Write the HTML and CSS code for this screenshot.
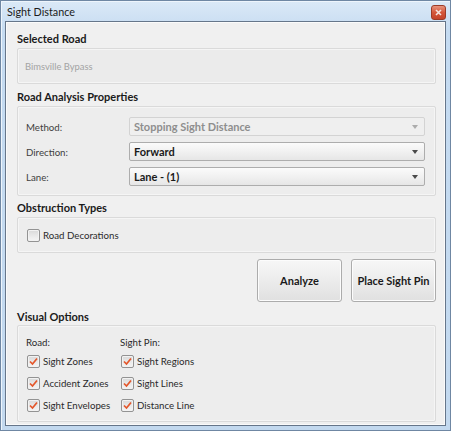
FILE: index.html
```html
<!DOCTYPE html>
<html>
<head>
<meta charset="utf-8">
<link rel="stylesheet" href="styles.css">
</head>
<body>
<div class="window">
  <div class="titlebar">
    <span class="title">Sight Distance</span>
    <span class="close"><svg width="7" height="7" viewBox="0 0 7 7"><path d="M1 1 L6 6 M6 1 L1 6" stroke="#f4e4e0" stroke-width="1.6" fill="none"/></svg></span>
  </div>
  <div class="client">
    <div class="section-title">Selected Road</div>
    <div class="group road-box"><span class="road-name">Bimsville Bypass</span></div>

    <div class="section-title gap5">Road Analysis Properties</div>
    <div class="group props">
      <div class="prop-row">
        <span class="prop-label">Method:</span>
        <div class="combo disabled"><span>Stopping Sight Distance</span><span class="arrow"></span></div>
      </div>
      <div class="prop-row">
        <span class="prop-label">Direction:</span>
        <div class="combo"><span>Forward</span><span class="arrow"></span></div>
      </div>
      <div class="prop-row">
        <span class="prop-label">Lane:</span>
        <div class="combo"><span>Lane - (1)</span><span class="arrow"></span></div>
      </div>
    </div>

    <div class="section-title gap4">Obstruction Types</div>
    <div class="group obstr">
      <div class="check"><span class="box"></span><span>Road Decorations</span></div>
    </div>

    <div class="actions">
      <button class="btn">Analyze</button>
      <button class="btn">Place Sight Pin</button>
    </div>

    <div class="section-title gap7">Visual Options</div>
    <div class="group visual">
      <div class="col">
        <div class="col-head">Road:</div>
        <div class="check row"><span class="box checked"><svg width="11" height="11" viewBox="0 0 11 11"><path d="M2 5.5 L4.5 8 L9 2.5" stroke="#e4572b" stroke-width="1.7" fill="none"/></svg></span><span>Sight Zones</span></div>
        <div class="check row"><span class="box checked"><svg width="11" height="11" viewBox="0 0 11 11"><path d="M2 5.5 L4.5 8 L9 2.5" stroke="#e4572b" stroke-width="1.7" fill="none"/></svg></span><span>Accident Zones</span></div>
        <div class="check row"><span class="box checked"><svg width="11" height="11" viewBox="0 0 11 11"><path d="M2 5.5 L4.5 8 L9 2.5" stroke="#e4572b" stroke-width="1.7" fill="none"/></svg></span><span>Sight Envelopes</span></div>
      </div>
      <div class="col">
        <div class="col-head">Sight Pin:</div>
        <div class="check row"><span class="box checked"><svg width="11" height="11" viewBox="0 0 11 11"><path d="M2 5.5 L4.5 8 L9 2.5" stroke="#e4572b" stroke-width="1.7" fill="none"/></svg></span><span>Sight Regions</span></div>
        <div class="check row"><span class="box checked"><svg width="11" height="11" viewBox="0 0 11 11"><path d="M2 5.5 L4.5 8 L9 2.5" stroke="#e4572b" stroke-width="1.7" fill="none"/></svg></span><span>Sight Lines</span></div>
        <div class="check row"><span class="box checked"><svg width="11" height="11" viewBox="0 0 11 11"><path d="M2 5.5 L4.5 8 L9 2.5" stroke="#e4572b" stroke-width="1.7" fill="none"/></svg></span><span>Distance Line</span></div>
      </div>
    </div>
  </div>
</div>
</body>
</html>
```

FILE: styles.css
```css
* { box-sizing: border-box; }
html, body { margin: 0; padding: 0; }
body {
  width: 451px;
  height: 431px;
  overflow: hidden;
  font-family: Lato, "Liberation Sans", Arial, sans-serif;
  font-size: 9.7px;
  color: #1e1e1e;
  background: #c6dcf2;
}
.window {
  width: 451px;
  height: 431px;
  border: 1px solid #6f87a3;
  background: linear-gradient(#dbe9f7, #c5dbf1 30px, #c3d9ef);
  padding: 0 4px 4px 4px;
  display: flex;
  flex-direction: column;
  box-shadow: inset 1px 1px 0 #eef5fc;
}
.titlebar {
  height: 20px;
  flex: none;
  display: flex;
  align-items: center;
  justify-content: space-between;
  padding-left: 2px;
}
.title {
  font-size: 10.8px;
  color: #1b1b1b;
  padding-top: 1px;
}
.close {
  width: 15px;
  height: 15px;
  margin-top: 3px;
  border: 1px solid #9b3b28;
  border-radius: 3px;
  background: linear-gradient(#e8947e, #d4573b 50%, #c4432a);
  display: flex;
  align-items: center;
  justify-content: center;
}
.close svg { display: block; }
.client {
  flex: 1;
  background: #f0f0f0;
  border: 1px solid #66768a;
  box-shadow: inset 0 0 0 1px #fbfbfb;
  padding: 9px 9px 0 11px;
  display: flex;
  flex-direction: column;
}
.section-title {
  font-weight: bold;
  font-size: 11px;
  height: 16px;
  line-height: 16px;
  flex: none;
  color: #1a1a1a;
}
.gap5 { margin-top: 5px; }
.gap4 { margin-top: 4px; }
.gap7 { margin-top: 7px; }
.group {
  flex: none;
  border: 1px solid #dadada;
  border-radius: 2px;
  background: #ededed;
  box-shadow: inset 0 0 0 1px #f5f5f5;
}
.road-box {
  margin-top: 1px;
  height: 36px;
  display: flex;
  align-items: center;
  padding-left: 7px;
  background: #ebebeb;
}
.road-name { color: #a3a3a3; font-size: 9.4px; }
.props {
  margin-top: 1px;
  height: 90px;
  padding: 10px 10px 9px 8px;
  display: flex;
  flex-direction: column;
  gap: 6px;
}
.prop-row {
  display: flex;
  align-items: center;
  height: 19px;
}
.prop-label {
  width: 103px;
  flex: none;
  color: #404040;
}
.combo {
  flex: 1;
  height: 19px;
  border: 1px solid #adadad;
  border-radius: 2px;
  background: linear-gradient(#fbfbfb, #f1f1f1 50%, #e6e6e6);
  display: flex;
  align-items: center;
  justify-content: space-between;
  padding: 0 6px 0 4px;
  font-weight: bold;
  font-size: 11px;
  color: #1a1a1a;
}
.combo.disabled {
  border-color: #d3d3d3;
  background: #efefef;
  color: #8e8e8e;
}
.arrow {
  width: 0;
  height: 0;
  border-left: 3.5px solid transparent;
  border-right: 3.5px solid transparent;
  border-top: 4px solid #4a4a4a;
}
.combo.disabled .arrow { border-top-color: #acacac; }
.obstr {
  margin-top: 1px;
  height: 36px;
  display: flex;
  align-items: center;
  padding-left: 9px;
}
.check {
  display: flex;
  align-items: center;
  color: #2a2a2a;
}
.box {
  width: 13px;
  height: 13px;
  flex: none;
  border: 1px solid #939393;
  border-radius: 2px;
  background: linear-gradient(#d9d9d9, #eeeeee 70%, #f4f4f4);
  box-shadow: inset 0 0 0 1px #f2f2f2;
  margin-right: 3px;
  display: flex;
  align-items: center;
  justify-content: center;
}
.box svg { display: block; }
.actions {
  flex: none;
  margin-top: 6px;
  height: 43px;
  display: flex;
  justify-content: flex-end;
  gap: 9px;
}
.btn {
  width: 85px;
  height: 43px;
  border: 1px solid #acacac;
  border-radius: 3px;
  background: linear-gradient(#f7f7f7, #ececec 50%, #e0e0e0);
  box-shadow: inset 0 0 0 1px #fcfcfc;
  font-family: Lato, "Liberation Sans", Arial, sans-serif;
  font-size: 11px;
  font-weight: bold;
  color: #1a1a1a;
  padding: 0;
}
.visual {
  height: 97px;
  padding: 8px 0 5px 8px;
  display: grid;
  grid-template-columns: 94px auto;
  justify-content: start;
}
.col-head {
  height: 16px;
  line-height: 16px;
  color: #2a2a2a;
}
.row {
  height: 22px;
  padding-left: 1px;
}
```
